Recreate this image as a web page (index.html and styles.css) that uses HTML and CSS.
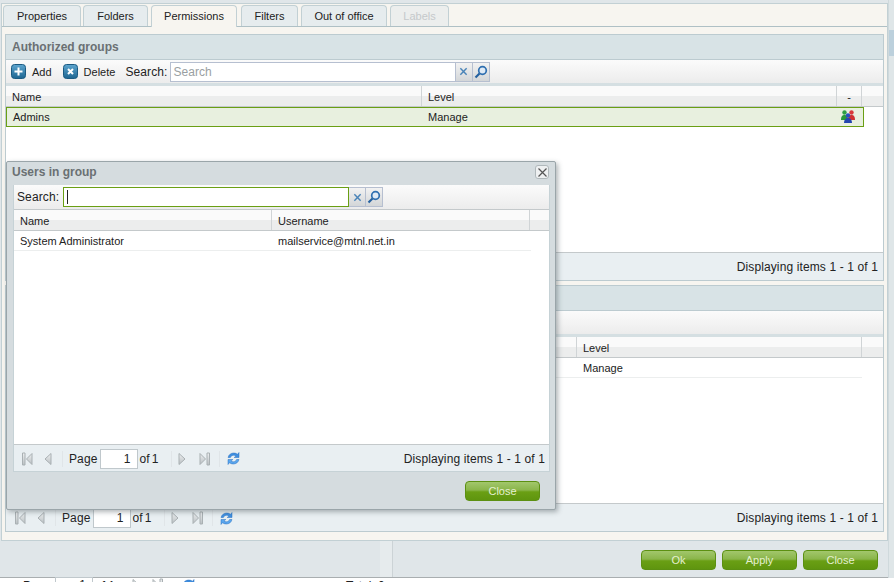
FILE: index.html
```html
<!DOCTYPE html>
<html lang="en">
<head>
<meta charset="utf-8">
<title>Permissions</title>
<link rel="stylesheet" href="styles.css">
</head>
<body>
<svg class="defs" width="0" height="0">
  <defs>
    <linearGradient id="blue" x1="0" y1="0" x2="0" y2="1"><stop offset="0" stop-color="#5ea6cf"/><stop offset="1" stop-color="#1d6591"/></linearGradient>
    <linearGradient id="lite" x1="0" y1="0" x2="0" y2="1"><stop offset="0" stop-color="#eef0f1"/><stop offset="1" stop-color="#b9bfc2"/></linearGradient>
    <symbol id="i-first" viewBox="0 0 12 14"><path d="M1.500 1h2.500v12H1.500z" fill="url(#lite)" stroke="#a9b0b3"/><path d="M11 1.500v11L5.500 7z" fill="url(#lite)" stroke="#a9b0b3"/></symbol>
    <symbol id="i-prev" viewBox="0 0 8 14"><path d="M7 1.500v11L1 7z" fill="url(#lite)" stroke="#a9b0b3"/></symbol>
    <symbol id="i-next" viewBox="0 0 8 14"><path d="M1 1.500v11L7 7z" fill="url(#lite)" stroke="#a9b0b3"/></symbol>
    <symbol id="i-last" viewBox="0 0 12 14"><path d="M1 1.500v11L6.500 7z" fill="url(#lite)" stroke="#a9b0b3"/><path d="M8 1h2.500v12H8z" fill="url(#lite)" stroke="#a9b0b3"/></symbol>
    <symbol id="i-refresh" viewBox="0 0 15 15"><path d="M2 6.500C2.800 3.500 5 2 7.800 2c1.500 0 2.700.5 3.700 1.300L13 1.500V6.500H8.200l1.700-1.600C9.300 4.400 8.600 4.200 7.800 4.200 6.300 4.200 5 5 4.400 6.500z" fill="#3f8fe0" stroke="#2a70c0" stroke-width=".5"/><path d="M13 8.500C12.200 11.500 10 13 7.200 13c-1.500 0-2.700-.5-3.700-1.300L2 13.500V8.500h4.800l-1.700 1.600c.6.500 1.300.7 2.100.7 1.500 0 2.800-.8 3.400-2.300z" fill="#5aa6ee" stroke="#2a70c0" stroke-width=".5"/></symbol>
    <symbol id="i-clear" viewBox="0 0 10 10"><path d="M1.500 1.500l7 7M8.500 1.500l-7 7" stroke="#4a84b8" stroke-width="1.600" fill="none"/></symbol>
    <symbol id="i-search" viewBox="0 0 14 14"><circle cx="8.500" cy="5.500" r="3.800" fill="#dfeaf5" stroke="#2f6fb0" stroke-width="1.700"/><path d="M5.500 8.500L1.500 12.500" stroke="#24609f" stroke-width="2.200" fill="none"/></symbol>
  </defs>
</svg>

<div class="stage">
  <div class="window">
    <div class="sheet">
      <div class="tabs">
        <span class="tab">Properties</span>
        <span class="tab">Folders</span>
        <span class="tab active">Permissions</span>
        <span class="tab">Filters</span>
        <span class="tab">Out of office</span>
        <span class="tab off">Labels</span>
      </div>

      <section class="panel first">
        <h2 class="panel-title">Authorized groups</h2>
        <div class="toolbar">
          <span class="tool"><svg class="round" width="15" height="15" viewBox="0 0 15 15"><rect x=".5" y=".5" width="14" height="14" rx="3" fill="url(#blue)" stroke="#1b5a82"/><path d="M7.500 3.500v8M3.500 7.500h8" stroke="#fff" stroke-width="2"/></svg>Add</span>
          <span class="tool"><svg class="round" width="15" height="15" viewBox="0 0 15 15"><rect x=".5" y=".5" width="14" height="14" rx="3" fill="url(#blue)" stroke="#1b5a82"/><path d="M5 5l5 5M10 5l-5 5" stroke="#fff" stroke-width="2"/></svg>Delete</span>
          <label class="search-label">Search:</label>
          <span class="search wide"><span class="search-text">Search</span></span>
          <span class="sbtn"><svg width="9" height="9"><use href="#i-clear"/></svg></span>
          <span class="sbtn"><svg width="14" height="14"><use href="#i-search"/></svg></span>
        </div>
        <div class="grid-head">
          <span class="col c-name1">Name</span>
          <span class="col c-level1">Level</span>
          <span class="col c-act">-</span>
        </div>
        <div class="row selected">
          <span class="cell c-name1">Admins</span>
          <span class="cell c-level1">Manage</span>
          <span class="cell c-icon">
            <svg width="16" height="15" viewBox="0 0 16 15">
              <circle cx="4.500" cy="3.500" r="2.200" fill="#2ea043"/><path d="M1 11c0-4 1.500-5 3.500-5S8 7 8 11z" fill="#2a9a3c"/>
              <circle cx="11.500" cy="3.500" r="2.200" fill="#d8393a"/><path d="M8 11c0-4 1.500-5 3.500-5S15 7 15 11z" fill="#cf3232"/>
              <circle cx="8" cy="6.500" r="2.200" fill="#2c4fc0"/><path d="M4 14c0-3.500 1.800-5 4-5s4 1.500 4 5z" fill="#2546b0"/>
            </svg>
          </span>
        </div>
        <div class="grid-body"></div>
        <div class="pager">
          <svg class="pg first-i" width="12" height="14"><use href="#i-first"/></svg>
          <svg class="pg prev-i" width="8" height="14"><use href="#i-prev"/></svg>
          <span class="pg-sep"></span>
          <span class="pg-label">Page</span><span class="pg-input">1</span><span class="pg-of">of 1</span>
          <span class="pg-sep"></span>
          <svg class="pg next-i" width="8" height="14"><use href="#i-next"/></svg>
          <svg class="pg last-i" width="12" height="14"><use href="#i-last"/></svg>
          <span class="pg-sep"></span>
          <svg class="pg" width="15" height="15"><use href="#i-refresh"/></svg>
          <span class="pg-info">Displaying items 1 - 1 of 1</span>
        </div>
      </section>

      <section class="panel second">
        <h2 class="panel-title">&nbsp;</h2>
        <div class="toolbar"></div>
        <div class="grid-head">
          <span class="col c-name2"></span>
          <span class="col c-level2">Level</span>
        </div>
        <div class="row plain r2">
          <span class="cell c-name2"></span>
          <span class="cell c-level2">Manage</span>
        </div>
        <div class="grid-body"></div>
        <div class="pager">
          <svg class="pg first-i" width="12" height="14"><use href="#i-first"/></svg>
          <svg class="pg prev-i" width="8" height="14"><use href="#i-prev"/></svg>
          <span class="pg-sep"></span>
          <span class="pg-label">Page</span><span class="pg-input">1</span><span class="pg-of">of 1</span>
          <span class="pg-sep"></span>
          <svg class="pg next-i" width="8" height="14"><use href="#i-next"/></svg>
          <svg class="pg last-i" width="12" height="14"><use href="#i-last"/></svg>
          <span class="pg-sep"></span>
          <svg class="pg" width="15" height="15"><use href="#i-refresh"/></svg>
          <span class="pg-info">Displaying items 1 - 1 of 1</span>
        </div>
      </section>
    </div>

    <div class="buttonbar">
      <div class="buttonbar-left"></div>
      <div class="buttonbar-right">
        <button class="btn">Ok</button>
        <button class="btn">Apply</button>
        <button class="btn">Close</button>
      </div>
    </div>
  </div>

  <div class="scroll-strip"></div>

  <div class="behind">
    <span class="behind-page">Page</span><span class="behind-input">1</span><span class="behind-of">of 1</span>
    <svg class="behind-next" width="8" height="14"><use href="#i-next"/></svg>
    <svg class="behind-last" width="12" height="14"><use href="#i-last"/></svg>
    <svg class="behind-refresh" width="15" height="15"><use href="#i-refresh"/></svg>
    <span class="behind-total">Total: 0</span>
  </div>

  <div class="dialog">
    <div class="dialog-head">
      <h3 class="dialog-title">Users in group</h3>
      <span class="dialog-x"><svg width="9" height="9" viewBox="0 0 9 9"><path d="M.5.5l8 8M8.500.5l-8 8" stroke="#555" stroke-width="1.200" fill="none"/></svg></span>
    </div>
    <div class="dialog-body">
      <div class="toolbar dlg-tools">
        <label class="search-label">Search:</label>
        <span class="search focus"><span class="caret"></span></span>
        <span class="sbtn"><svg width="9" height="9"><use href="#i-clear"/></svg></span>
        <span class="sbtn"><svg width="14" height="14"><use href="#i-search"/></svg></span>
      </div>
      <div class="grid-head">
        <span class="col c-dname">Name</span>
        <span class="col c-duser">Username</span>
      </div>
      <div class="row plain">
        <span class="cell c-dname">System Administrator</span>
        <span class="cell c-duser">mailservice@mtnl.net.in</span>
      </div>
      <div class="grid-body"></div>
      <div class="pager dlg-pager">
        <svg class="pg first-i" width="12" height="14"><use href="#i-first"/></svg>
        <svg class="pg prev-i" width="8" height="14"><use href="#i-prev"/></svg>
        <span class="pg-sep"></span>
        <span class="pg-label">Page</span><span class="pg-input">1</span><span class="pg-of">of 1</span>
        <span class="pg-sep"></span>
        <svg class="pg next-i" width="8" height="14"><use href="#i-next"/></svg>
        <svg class="pg last-i" width="12" height="14"><use href="#i-last"/></svg>
        <span class="pg-sep"></span>
        <svg class="pg" width="15" height="15"><use href="#i-refresh"/></svg>
        <span class="pg-info">Displaying items 1 - 1 of 1</span>
      </div>
    </div>
    <div class="dialog-foot"><button class="btn">Close</button></div>
  </div>
</div>
</body>
</html>
```

FILE: styles.css
```css
* { box-sizing: border-box; }
html, body { margin: 0; padding: 0; overflow: hidden; }
body { width: 894px; height: 582px; font-family: "Liberation Sans", Arial, sans-serif; font-size: 11px; color: #222; background: #fff; }
.defs { position: absolute; }
.stage { position: relative; width: 894px; height: 582px; overflow: hidden; display: grid; grid-template-columns: 888px 6px; grid-template-rows: 578px 4px; }

.window { background: #e0e6e9; padding-top: 3px; border-bottom: 1px solid #a9aeb0; display: flex; flex-direction: column; }
.sheet { margin-left: 1px; height: 538px; background: #f7f5f0; border: 1px solid #c2d0d4; display: flex; flex-direction: column; padding: 0 3px 0 3px; }

.tabs { display: flex; align-items: flex-start; height: 23px; margin: 0 -3px 7px; padding: 1px 0 0 1px; border-bottom: 1px solid #afc0c5; flex: none; }
.tab { height: 21px; line-height: 21px; background: #e6ecee; border: 1px solid #c2d0d4; border-bottom: 0; border-radius: 4px 4px 0 0; font-size: 11px; color: #222; text-align: center; white-space: nowrap; flex: none; }
.tab:nth-child(1) { width: 78px; }
.tab:nth-child(2) { width: 65px; margin-left: 2px; }
.tab:nth-child(3) { width: 86px; height: 22px; background: #f7f5f0; margin-left: 3px; }
.tab:nth-child(4) { width: 57px; margin-left: 4px; }
.tab:nth-child(5) { width: 86px; margin-left: 3px; }
.tab:nth-child(6) { width: 59px; margin-left: 3px; color: #c5c9cb; background: #eceeed; }

.panel { width: 879px; height: 247px; background: #fff; border: 1px solid #bccbd0; display: flex; flex-direction: column; flex: none; }
.panel.second { margin-top: 4px; }
.panel-title { margin: 0; height: 25px; flex: none; background: #d8e3e6; border-bottom: 1px solid #bccbd0; font-size: 12px; font-weight: bold; line-height: 25px; padding-left: 6px; color: #6a7073; }
.toolbar { height: 26px; flex: none; display: flex; align-items: center; padding-left: 5px; background: linear-gradient(#fbfbfb, #ececec); border-bottom: 3px solid #d5dfe2; }
.tool { display: inline-flex; align-items: center; font-size: 11px; margin-right: 11px; }
.tool + .tool { margin-right: 10px; }
.round { margin-right: 6px; }
.search-label { font-size: 12px; margin-right: 2px; letter-spacing: .12px; }
.dlg-tools .search-label { margin-right: 4px; }
.search { height: 20px; background: #fff; border: 1px solid #b6bfd0; display: inline-flex; align-items: center; }
.search.wide { width: 286px; }
.search.focus { width: 286px; border-color: #6a9f14; }
.search-text { font-size: 12px; color: #9a9fa2; padding-left: 3px; }
.caret { width: 1px; height: 14px; background: #222; margin-left: 3px; }
.sbtn { width: 17px; height: 20px; display: inline-flex; align-items: center; justify-content: center; background: linear-gradient(#f2f2f2, #d3d6d8); border: 1px solid #b6bfd0; border-left: 0; }

.grid-head { height: 21px; flex: none; display: flex; background: linear-gradient(#fafafa 50%, #eceded 50%); border-bottom: 1px solid #c4c9cb; }
.col { padding-left: 6px; line-height: 22px; font-size: 11px; border-right: 1px solid #d0d4d6; height: 20px; }
.row { height: 20px; flex: none; display: flex; line-height: 18px; font-size: 11px; }
.cell { padding-left: 6px; height: 18px; }
.row.selected { width: 858px; background: #e8f0df; border: 1px solid #6a9f14; }
.row.selected .cell { line-height: 18px; }
.row.plain { border-bottom: 1px solid #eceeee; line-height: 20px; }
.row.plain .cell { height: 19px; }
.row.r2 { width: 856px; }

.c-name1 { width: 415px; }
.col.c-name1 { width: 416px; }
.c-level1 { width: 415px; }
.c-act { width: 25px; text-align: center; padding-left: 0; }
.c-icon { flex: 1; padding: 1px 0 0 3px; }
.c-name2 { width: 571px; }
.c-level2 { width: 285px; }
.c-dname { width: 258px; }
.c-duser { width: 258px; }
.row.plain .c-duser { width: 259px; }
.dialog-body .row.plain { width: 517px; }
.dialog-body .row.plain .cell { line-height: 21px; }

.grid-body { flex: 1; background: #fff; }

.pager { height: 28px; flex: none; display: flex; align-items: center; padding: 0 5px 0 8px; background: #e9eff2; border-top: 1px solid #c4c9cb; font-size: 12px; }
.second .pager { padding-top: 1px; }
.pg { flex: none; }
.first-i { margin-right: 11px; }
.prev-i { margin-right: 10px; }
.next-i { margin-right: 13px; }
.last-i { margin-right: 8px; }
.pg-sep { width: 1px; height: 16px; background: #e0e5e8; flex: none; margin-right: 6px; }
.pg-label { margin-right: 2px; letter-spacing: .12px; }
.pg-input { width: 38px; height: 20px; background: #fff; border: 1px solid #c0c8cc; text-align: right; padding-right: 6px; line-height: 18px; }
.pg-of { margin-left: 2px; margin-right: 12px; word-spacing: -1px; }
.pg-info { margin-left: auto; letter-spacing: .12px; }

.buttonbar { flex: 1; display: flex; min-height: 0; }
.buttonbar-left { width: 393px; background: linear-gradient(90deg, #e0e6e9 0, #e0e6e9 380px, #e6ebed 380px); border-right: 1px solid #ccd3d6; }
.buttonbar-right { flex: 1; display: flex; justify-content: flex-end; gap: 6px; padding: 9px 10px 0 0; align-items: flex-start; }

.btn { width: 75px; height: 20px; padding: 0; border: 1px solid #5c9012; border-radius: 4px; font: 11px "Liberation Sans", Arial, sans-serif; color: #e4f0cf; background: linear-gradient(#a2c76c 0, #8ab54a 45%, #6a9f14 55%, #5f950f 100%); }

.scroll-strip { background: linear-gradient(#dfe6e8 0, #dfe6e8 30px, #bcd0dc 30px, #bcd0dc 56px, #dfe6e8 56px); border-left: 1px solid #cfd9dc; }

.behind { grid-column: 1 / 3; background: #fff; font-size: 12px; display: flex; align-items: flex-start; white-space: nowrap; line-height: 14px; }
.behind-page { margin-left: 23px; margin-top: 1px; }
.behind-input { width: 38px; height: 20px; margin-left: 4px; margin-top: -1px; border: 1px solid #c0c8cc; text-align: right; padding-right: 6px; }
.behind-of { margin-left: 2px; margin-top: 1px; }
.behind-next { margin-left: 17px; }
.behind-last { margin-left: 12px; }
.behind-refresh { margin-left: 17px; }
.behind-total { margin-left: 150px; margin-top: 1px; }

.dialog { position: absolute; left: 6px; top: 161px; width: 550px; height: 349px; background: #d5dcdf; border: 1px solid #9aa5a9; border-radius: 2px; box-shadow: 2px 2px 5px rgba(80,90,95,.45); display: flex; flex-direction: column; }
.dialog-head { height: 23px; flex: none; display: flex; align-items: center; justify-content: space-between; padding: 0 6px 3px 5px; }
.dialog-title { margin: 0; font-size: 12px; font-weight: bold; color: #6a7073; }
.dialog-x { width: 14px; height: 14px; display: inline-flex; align-items: center; justify-content: center; background: #eef0f1; border: 1px solid #b0b8bb; border-radius: 3px; }
.dialog-body { margin: 0 6px 0 6px; height: 287px; width: 537px; flex: none; background: #fff; border: 1px solid #c6d2d6; border-top: 0; display: flex; flex-direction: column; }
.dlg-tools { height: 25px; padding-left: 3px; border-bottom: 1px solid #c4c9cb; }
.dlg-pager { height: 27px; padding: 1px 4px 0 7px; }
.dialog-foot { flex: 1; display: flex; justify-content: flex-end; align-items: flex-start; padding: 9px 15px 0 0; }
```
